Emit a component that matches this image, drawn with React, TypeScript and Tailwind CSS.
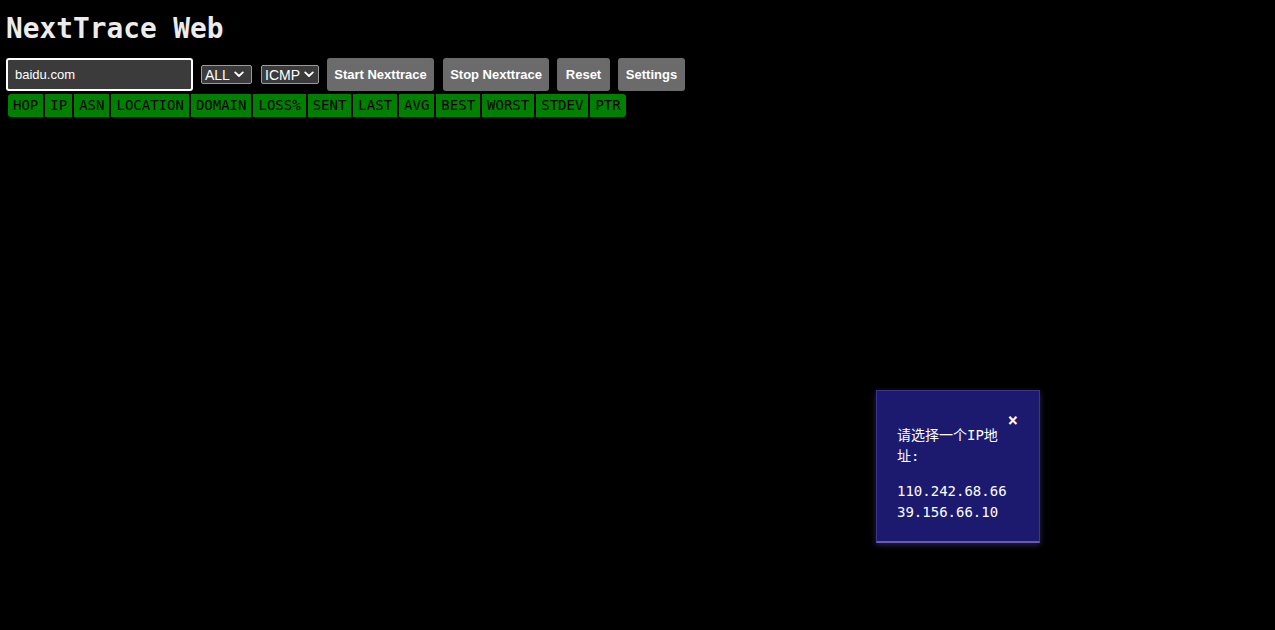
import React from "react";

const headers = ["HOP","IP","ASN","LOCATION","DOMAIN","LOSS%","SENT","LAST","AVG","BEST","WORST","STDEV","PTR"];

function Chevron() {
  return (
    <svg width="10" height="7" viewBox="0 0 10 7" className="ml-[4px]">
      <path d="M1.2 1.4 L5 5 L8.8 1.4" fill="none" stroke="white" strokeWidth="1.8" strokeLinecap="round" strokeLinejoin="round" />
    </svg>
  );
}

function Select({ label, w }: { label: string; w: string }) {
  return (
    <div className={`flex items-center h-[19px] ${w} bg-[#3b3b3b] border border-[#9a9a9a] rounded-[2px] pl-[3px] text-white text-[14px] leading-none`} style={{ fontFamily: '"Liberation Sans", Arial, sans-serif' }}>
      <span>{label}</span>
      <Chevron />
    </div>
  );
}

function Btn({ children, w }: { children: React.ReactNode; w: string }) {
  return (
    <button className={`h-[33px] ${w} flex items-center justify-center bg-[#6b6b6b] text-white text-[13px] font-bold rounded-[3px] whitespace-nowrap`} style={{ fontFamily: '"Liberation Sans", Arial, sans-serif' }}>
      {children}
    </button>
  );
}

export default function App() {
  return (
    <div className="w-[1275px] h-[630px] bg-black relative overflow-hidden" style={{ fontFamily: '"DejaVu Sans Mono", monospace' }}>
      <div className="px-[6px] pt-[13px]">
        <h1 className="text-[27.8px] leading-[32px] font-bold text-[#ececec]">NextTrace Web</h1>
        <div className="flex items-center mt-[13px] h-[33px]">
          <div className="w-[187px] h-[33px] border-2 border-white rounded-[3px] bg-[#3b3b3b] flex items-center pl-[7px] text-white text-[13px]" style={{ fontFamily: '"Liberation Sans", Arial, sans-serif' }}>
            baidu.com
          </div>
          <div className="ml-[8px]"><Select label="ALL" w="w-[51px]" /></div>
          <div className="ml-[9px]"><Select label="ICMP" w="w-[58px]" /></div>
          <div className="ml-[8px] flex">
            <Btn w="w-[107px]">Start Nexttrace</Btn>
            <div className="ml-[9px]"><Btn w="w-[106px]">Stop Nexttrace</Btn></div>
            <div className="ml-[8px]"><Btn w="w-[53px]">Reset</Btn></div>
            <div className="ml-[8px]"><Btn w="w-[67px]">Settings</Btn></div>
          </div>
        </div>
        <div className="flex gap-[2px] mt-[3px] ml-[2px]">
          {headers.map((h, i) => (
            <div
              key={h}
              className={`h-[23px] px-[5px] bg-[#008000] text-black text-[14px] flex items-center ${i === 0 ? "rounded-bl-[3px] rounded-tl-[3px]" : ""} ${i === headers.length - 1 ? "rounded-tr-[3px] rounded-br-[3px]" : ""}`}
            >
              {h}
            </div>
          ))}
        </div>
      </div>

      <div className="absolute left-[876px] top-[390px] w-[164px] h-[153px] bg-[#1b1a6f] border-x border-t border-[#3a3590] border-b-2 border-b-[#6a5aa8] shadow-[0_2px_6px_rgba(120,100,200,0.35)] px-[20px] pt-[20px] text-white text-[14px] leading-[21px]" style={{ fontFamily: '"DejaVu Sans Mono", "Noto Sans CJK SC", monospace' }}>
        <span className="absolute right-[21px] top-[21px] text-[17px] font-bold leading-none">×</span>
        <p className="mt-[14px] w-[108px]">请选择一个IP地址:</p>
        <p className="mt-[14px]">110.242.68.66</p>
        <p>39.156.66.10</p>
      </div>
    </div>
  );
}
